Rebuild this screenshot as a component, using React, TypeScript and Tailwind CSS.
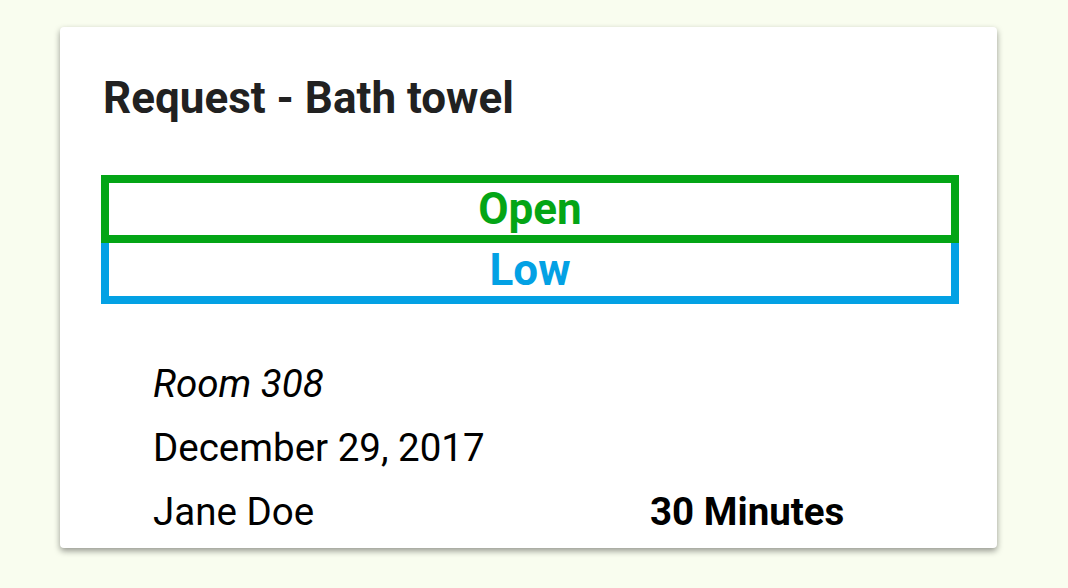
// App.tsx — request card

export default function App() {
  return (
    <div className="min-h-[588px] w-full bg-[#f9fdef] pt-[27px] pl-[60px] font-['Roboto',sans-serif]">
      <div className="w-[937px] h-[521px] rounded bg-white px-[41px] pt-[45px] shadow-[0_3px_6px_rgba(0,0,0,0.4)]">
        <h1 className="ml-[2px] text-[44px] font-bold leading-[52px] text-[#212121]">
          Request - Bath towel
        </h1>

        <div className="mt-[51px] w-[858px]">
          <div className="flex h-[68px] items-center justify-center border-[8px] border-[#04a516] text-[44px] font-bold leading-[52px] text-[#04a516]">
            Open
          </div>
          <div className="flex h-[61px] items-center justify-center border-[8px] border-t-0 border-[#03a1e4] text-[44px] font-bold leading-[52px] text-[#03a1e4]">
            Low
          </div>
        </div>

        <div className="mt-[48px] pl-[52px] text-[38.5px] leading-[64px] text-black">
          <div className="italic">Room 308</div>
          <div>December 29, 2017</div>
          <div className="flex">
            <div className="w-[497px]">Jane Doe</div>
            <div className="font-bold">30 Minutes</div>
          </div>
        </div>
      </div>
    </div>
  );
}
